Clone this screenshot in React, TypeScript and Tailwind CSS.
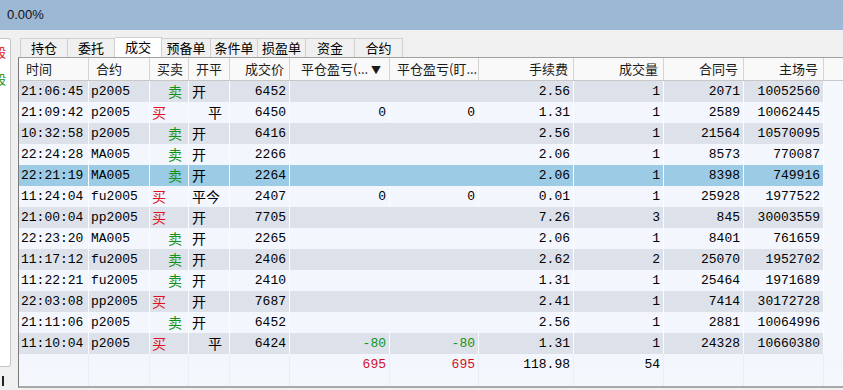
const cols = [
  { key: "time", label: "时间", w: "w-[70px]", align: "left" },
  { key: "code", label: "合约", w: "w-[61px]", align: "left" },
  { key: "bs", label: "买卖", w: "w-[39px]", align: "left" },
  { key: "oc", label: "开平", w: "w-[41px]", align: "left" },
  { key: "price", label: "成交价", w: "w-[60px]", align: "right" },
  { key: "pl1", label: "平仓盈亏(...", w: "w-[100px]", align: "sort" },
  { key: "pl2", label: "平仓盈亏(盯...", w: "w-[89px]", align: "left" },
  { key: "fee", label: "手续费", w: "w-[95px]", align: "right" },
  { key: "vol", label: "成交量", w: "w-[90px]", align: "right" },
  { key: "ord", label: "合同号", w: "w-[80px]", align: "right" },
  { key: "sys", label: "主场号", w: "w-[80px]", align: "right" },
];

const rows = [
  ["21:06:45", "p2005", "卖", "开", "6452", "", "", "2.56", "1", "2071", "10052560"],
  ["21:09:42", "p2005", "买", "平", "6450", "0", "0", "1.31", "1", "2589", "10062445"],
  ["10:32:58", "p2005", "卖", "开", "6416", "", "", "2.56", "1", "21564", "10570095"],
  ["22:24:28", "MA005", "卖", "开", "2266", "", "", "2.06", "1", "8573", "770087"],
  ["22:21:19", "MA005", "卖", "开", "2264", "", "", "2.06", "1", "8398", "749916"],
  ["11:24:04", "fu2005", "买", "平今", "2407", "0", "0", "0.01", "1", "25928", "1977522"],
  ["21:00:04", "pp2005", "买", "开", "7705", "", "", "7.26", "3", "845", "30003559"],
  ["22:23:20", "MA005", "卖", "开", "2265", "", "", "2.06", "1", "8401", "761659"],
  ["11:17:12", "fu2005", "卖", "开", "2406", "", "", "2.62", "2", "25070", "1952702"],
  ["11:22:21", "fu2005", "卖", "开", "2410", "", "", "1.31", "1", "25464", "1971689"],
  ["22:03:08", "pp2005", "买", "开", "7687", "", "", "2.41", "1", "7414", "30172728"],
  ["21:11:06", "p2005", "卖", "开", "6452", "", "", "2.56", "1", "2881", "10064996"],
  ["11:10:04", "p2005", "买", "平", "6424", "-80", "-80", "1.31", "1", "24328", "10660380"],
];

const tabs = ["持仓", "委托", "成交", "预备单", "条件单", "损盈单", "资金", "合约"];
const tabW = ["w-[48px]", "w-[47px]", "w-[47px]", "w-[49px]", "w-[47px]", "w-[48px]", "w-[49px]", "w-[48px]"];

const mono = "font-['Liberation_Mono','Noto_Sans_CJK_SC',monospace]";
const cjk = "font-['Noto_Sans_CJK_SC',sans-serif]";

function Cell({ i, v }: { i: number; v: string }) {
  const c = cols[i];
  if (i === 2) {
    return (
      <div className={`${c.w} shrink-0 border-r border-[#fbfcfe] ${cjk} text-[14px] ${v === "买" ? "pl-[2px] text-[#e0101a]" : "pl-[18px] text-[#11921a]"}`}>
        {v}
      </div>
    );
  }
  if (i === 3) {
    return (
      <div className={`${c.w} shrink-0 border-r border-[#fbfcfe] ${cjk} text-[14px] ${v === "平" ? "pl-[19px]" : "pl-[3px]"}`}>
        {v}
      </div>
    );
  }
  const color = v.startsWith("-") ? "text-[#11921a]" : "text-black";
  return (
    <div
      className={`${c.w} shrink-0 border-r border-[#fbfcfe] ${color} ${
        i < 2 ? "pl-[2px] text-left" : "pr-[3px] text-right"
      }`}
    >
      {v}
    </div>
  );
}

export default function App() {
  return (
    <div className="w-[843px] h-[390px] overflow-hidden bg-[#f0f0f0] font-['Liberation_Sans',sans-serif] text-[13px] text-black">
      <div className="h-[30px] bg-[#9db8d4] flex items-center pl-[7px] text-[13px] text-[#111]">0.00%</div>
      <div className="flex">
        <div className="w-[18px] shrink-0 flex flex-col">
          <div className="mt-[8px] w-[11px] h-[329px] bg-white border border-l-0 border-[#c4c4c4] rounded-r-[3px] overflow-hidden flex flex-col">
            <div className={`${cjk} text-[13px] leading-[14px] ml-[-7px] mt-[6px] text-[#e0101a]`}>般</div>
            <div className={`${cjk} text-[13px] leading-[14px] ml-[-7px] mt-[13px] text-[#11921a]`}>般</div>
          </div>
          <div className="ml-[2px] mt-[9px] w-[2px] h-[10px] bg-[#222]" />
        </div>
        <div className="flex-1 flex flex-col">
          <div className="mt-[8px] h-[19px] flex items-end pl-[2px]">
            {tabs.map((t, i) => (
              <div
                key={t}
                className={`${tabW[i]} shrink-0 ${cjk} text-[13px] leading-[18px] text-center border-t border-r border-[#d0d0d0] ${
                  i === 0 ? "border-l" : ""
                } ${i === 2 ? "bg-white h-[20px]" : "h-[19px] bg-[#f0f0f0]"}`}
              >
                {t}
              </div>
            ))}
          </div>
          <div className="h-[331px] flex flex-col border-l border-t border-b-2 border-l-[#7a7a7a] border-t-[#a0a0a0] border-b-[#a8a8a8] bg-[#f4f7fc]">
            <div className={`h-[23px] flex bg-[#f9f9f9] border-b border-[#c8c8c8] ${cjk} text-[13px] text-[#1a1a1a]`}>
              {cols.map((c) => (
                <div
                  key={c.key}
                  className={`${c.w} shrink-0 flex items-center whitespace-nowrap overflow-hidden border-r border-[#d4d4d4] ${
                    c.align === "right"
                      ? "justify-end pr-[5px]"
                      : c.align === "sort"
                      ? "pl-[11px] pr-[8px] justify-between"
                      : "pl-[7px]"
                  }`}
                >
                  <span>{c.label}</span>
                  {c.align === "sort" && <span className="text-[10px]">▼</span>}
                </div>
              ))}
              <div className="flex-1" />
            </div>
            {rows.map((r, ri) => (
              <div
                key={ri}
                className={`h-[21px] flex items-center leading-[21px] ${mono} text-[13px] ${
                  ri === 4 ? "bg-[#9ccbe6]" : ri % 2 === 0 ? "bg-[#dde2ea]" : "bg-[#f3f7fd]"
                }`}
              >
                {r.map((v, i) => (
                  <Cell key={i} i={i} v={v} />
                ))}
                <div className="flex-1 h-full bg-[#f4f7fc]" />
              </div>
            ))}
            <div className={`h-[21px] flex items-center leading-[21px] ${mono} text-[13px] bg-[#f3f7fd]`}>
              {["", "", "", "", "", "695", "695", "118.98", "54", "", ""].map((v, i) => (
                <div
                  key={i}
                  className={`${cols[i].w} shrink-0 h-full border-r border-[#e9eef5] text-right pr-[3px] ${
                    i === 5 || i === 6 ? "text-[#d0102a]" : "text-black"
                  }`}
                >
                  {v}
                </div>
              ))}
              <div className="flex-1" />
            </div>
            <div className="flex-1 flex">
              {cols.map((c) => (
                <div key={c.key} className={`${c.w} shrink-0 border-r border-[#e9eef5]`} />
              ))}
            </div>
          </div>
        </div>
      </div>
    </div>
  );
}
